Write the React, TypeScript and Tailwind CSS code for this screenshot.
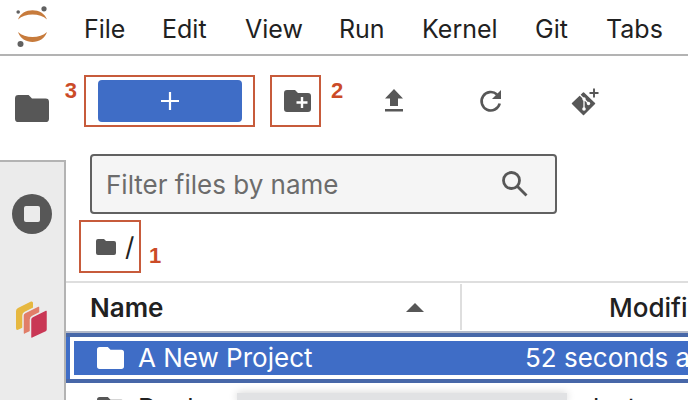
import React from "react";

const menus = [
  { label: "File", width: "w-[78px]" },
  { label: "Edit", width: "w-[83px]" },
  { label: "View", width: "w-[94px]" },
  { label: "Run", width: "w-[83px]" },
  { label: "Kernel", width: "w-[113px]" },
  { label: "Git", width: "w-[71px]" },
  { label: "Tabs", width: "w-[82px]" },
];

function Folder({ className }: { className: string }) {
  return (
    <svg viewBox="0 0 20 16" preserveAspectRatio="none" className={className} fill="currentColor" aria-hidden="true">
      <path d="M2 0h6l2 2h8a2 2 0 0 1 2 2v10a2 2 0 0 1-2 2H2a2 2 0 0 1-2-2V2a2 2 0 0 1 2-2z" />
    </svg>
  );
}

function Marker({ className, children }: { className: string; children: React.ReactNode }) {
  return (
    <span className={`font-['Liberation_Sans',Arial,sans-serif] text-[22px] font-bold leading-7 text-[#cb4b27] ${className}`}>
      {children}
    </span>
  );
}

function Logo() {
  return (
    <svg viewBox="0 0 34 42" className="h-[42px] w-[34px]" aria-label="Jupyter" role="img">
      <path d="M2 13.5C6 1 27 1 31 13.5C24 6.800 9 6.800 2 13.500zM2 26C6 39.300 27 39.300 31 26C24 32.700 9 32.700 2 26z" fill="#c77b3c" />
      <circle cx="28" cy="2.800" r="2.600" fill="#616161" />
      <circle cx="2.200" cy="6" r="1.800" fill="#616161" />
      <circle cx="4.500" cy="38" r="3" fill="#616161" />
    </svg>
  );
}

const sheet = "M0 10Q0 8 2 7L15 .5Q17 0 17 2V20Q17 21.500 15.500 22.500L2 28.800Q0 29.500 0 27z";

function Layers() {
  return (
    <svg viewBox="0 0 34 40" className="h-10 w-[34px]" strokeLinejoin="round" aria-hidden="true">
      <path d={sheet} transform="translate(1 1)" fill="#e6b840" />
      <path d={sheet} transform="translate(8 5.500)" fill="#e17e68" stroke="#ebebeb" strokeWidth="1.500" />
      <path d={sheet} transform="translate(15.500 9.500)" fill="#c93755" stroke="#ebebeb" strokeWidth="1.500" />
    </svg>
  );
}

export default function App() {
  return (
    <div className="flex h-screen flex-col overflow-hidden bg-white font-['Inter','Liberation_Sans',sans-serif] text-[#212121]">
      <header className="flex h-14 shrink-0 items-center border-b-2 border-[#b3b3b3]">
        <div className="flex w-[84px] shrink-0 pl-4">
          <Logo />
        </div>
        <nav className="flex pt-1 text-[25px] leading-8">
          {menus.map((m) => (
            <button key={m.label} className={`shrink-0 text-left ${m.width}`}>{m.label}</button>
          ))}
        </nav>
      </header>

      <div className="flex min-h-0 flex-1">
        <aside className="flex w-[66px] shrink-0 flex-col text-[#575757]">
          <button aria-label="File browser" className="flex h-[104px] shrink-0 items-center pl-[15px]">
            <Folder className="h-[27px] w-[34px]" />
          </button>
          <div className="flex flex-1 flex-col items-center border-t-2 border-r-2 border-[#b3b3b3] bg-[#ebebeb] pt-8">
            <button aria-label="Running terminals and kernels" className="flex size-10 shrink-0 items-center justify-center rounded-full bg-[#575757]">
              <span className="size-4 rounded-xs bg-[#ebebeb]" />
            </button>
            <button aria-label="Collections" className="mt-[66px]"><Layers /></button>
          </div>
        </aside>

        <main className="flex min-w-0 flex-1 flex-col">
          <div className="flex h-[98px] shrink-0 items-start pt-[19px] pl-[18px] text-[#575757]">
            <div className="relative h-[52px] w-[171px] shrink-0 border-2 border-[#c75b3b] py-[3px] pr-[11px] pl-3">
              <button aria-label="New launcher" className="flex h-[42px] w-full items-center justify-center rounded-sm bg-[#3f6dc6]">
                <svg viewBox="0 0 20 20" className="size-5" stroke="white" strokeWidth="2.200" aria-hidden="true"><path d="M10 1v18M1 10h18" /></svg>
              </button>
              <Marker className="absolute top-0 right-full mr-[9px]">3</Marker>
            </div>
            <div className="relative ml-[15px] flex h-[52px] w-[51px] shrink-0 items-center justify-end border-2 border-[#c75b3b] pr-2">
              <button aria-label="New folder">
                <svg viewBox="0 0 27 22" className="h-[22px] w-[27px]" aria-hidden="true">
                  <path d="M3 0h8l3 3h10a3 3 0 0 1 3 3v13a3 3 0 0 1-3 3H3a3 3 0 0 1-3-3V3a3 3 0 0 1 3-3z" fill="currentColor" />
                  <path d="M18 7v11M12.500 12.500h11" stroke="white" strokeWidth="2.400" />
                </svg>
              </button>
              <Marker className="absolute top-0 left-full ml-3">2</Marker>
            </div>
            <button aria-label="Upload" className="mt-3 ml-[63px]">
              <svg viewBox="0 0 20 28" className="h-7 w-5" fill="currentColor" aria-hidden="true"><path d="M10 2L19 11.500H14V19H6V11.500H1zM1 22h18v2.500H1z" /></svg>
            </button>
            <button aria-label="Refresh" className="mt-3 ml-[74px]">
              <svg viewBox="0 0 24 28" className="h-7 w-6" aria-hidden="true">
                <path d="M21.700 16.500A9.200 9.200 0 1 1 19 7.500" fill="none" stroke="currentColor" strokeWidth="2.600" />
                <path d="M23 3v9h-9z" fill="currentColor" />
              </svg>
            </button>
            <button aria-label="Clone repository" className="mt-3 ml-[69px]">
              <svg viewBox="0 0 28 30" className="h-[30px] w-7" aria-hidden="true">
                <path d="M12.500 6L23.500 16.500L12.500 27.500L1.500 16.500z" fill="currentColor" stroke="currentColor" strokeWidth="1.500" strokeLinejoin="round" />
                <path d="M8.500 7.500L13 12v11M13 12l4.500 4.500" fill="none" stroke="white" strokeWidth="1.300" />
                <circle cx="13" cy="12" r="1.700" fill="white" /><circle cx="13" cy="22" r="1.800" fill="white" /><circle cx="17.500" cy="16.500" r="1.700" fill="white" />
                <path d="M23 1.500v9M18.500 6h9" stroke="currentColor" strokeWidth="1.900" />
              </svg>
            </button>
          </div>

          <label className="ml-6 mr-[131px] flex h-[60px] shrink-0 items-center rounded-sm border-2 border-[#616161] bg-[#f5f5f5] pr-[27px] pl-[14px] text-[#575757]">
            <input aria-label="Filter files by name" placeholder="Filter files by name" className="min-w-0 flex-1 bg-transparent pt-px text-[26px] leading-8 outline-none placeholder:text-[#6c6c6c]" />
            <svg viewBox="0 0 26 26" className="size-[26px]" fill="none" stroke="currentColor" strokeWidth="2.800" aria-hidden="true"><circle cx="9.500" cy="9.500" r="8" /><path d="M15.500 15.500l9 9" /></svg>
          </label>

          <div className="flex h-[67px] shrink-0 items-start pt-[6px] pl-[13px]">
            <div className="flex h-[53px] w-[62px] shrink-0 items-center border-2 border-[#c75b3b] pl-[15px]">
              <Folder className="h-4 w-5 text-[#575757]" />
              <a href="#root" className="ml-[9px] text-[26px] leading-8">/</a>
            </div>
            <Marker className="mt-[22px] ml-2">1</Marker>
          </div>

          <table className="w-[696px] shrink-0 table-fixed border-separate border-spacing-0 text-[26px] leading-8">
            <thead>
              <tr className="h-[52px]">
                <th className="w-[396px] border-t-2 border-b-2 border-t-[#dedede] border-b-[#b3b9c9] p-0 pl-6 text-left font-semibold">
                  <div className="flex items-center justify-between border-r-2 border-[#dedede] pr-9">
                    <button className="h-[46px] pt-0.5">Name</button>
                    <svg viewBox="0 0 18 9" className="h-[9px] w-[18px]" fill="#575757" aria-hidden="true"><path d="M9 0l9 9H0z" /></svg>
                  </div>
                </th>
                <th className="border-t-2 border-b-2 border-t-[#dedede] border-b-[#b3b9c9] p-0 pl-[147px] text-left font-medium"><button className="h-[46px] pt-0.5">Modified</button></th>
              </tr>
            </thead>
            <tbody>
              <tr className="h-[50px] bg-[#3f6dc6] text-white outline-4 -outline-offset-8 outline-white">
                <td className="border-y-4 border-[#4767a8] p-0 pl-[31px]">
                  <div className="flex items-center"><Folder className="mr-[14px] h-[22px] w-[27px]" />A New Project</div>
                </td>
                <td className="border-y-4 border-[#4767a8] p-0 pl-[63px] whitespace-nowrap">52 seconds ago</td>
              </tr>
              <tr className="h-[50px]">
                <td className="p-0 pl-[31px]"><div className="flex items-center"><Folder className="mr-[14px] h-[22px] w-[27px] text-[#575757]" />Docker</div></td>
                <td className="p-0 pl-[131px] whitespace-nowrap">last month</td>
              </tr>
            </tbody>
          </table>
        </main>
      </div>
      <div className="fixed bottom-0 left-[237px] h-[7px] w-[330px] bg-[#e1e2e4] shadow-[0_0_8px_#0003]" />
    </div>
  );
}
